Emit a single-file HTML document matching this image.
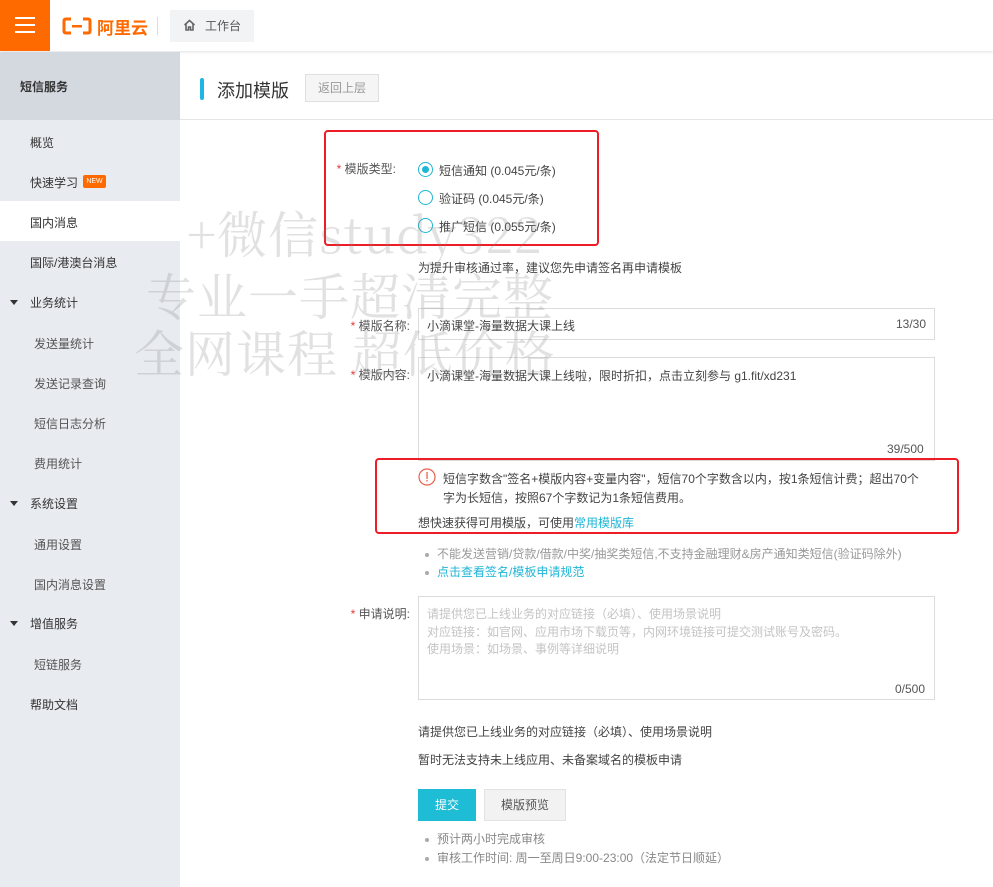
<!DOCTYPE html>
<html><head><meta charset="utf-8"><style>
*{margin:0;padding:0;box-sizing:border-box}
body{width:993px;height:887px;overflow:hidden;background:#fff;font-family:"Liberation Sans","Noto Sans CJK SC",sans-serif;font-size:12px;color:#333;position:relative}
.a{position:absolute;white-space:nowrap}
.side{position:absolute;left:0;top:52px;width:180px;height:835px;background:#e8ebf0}
.sidehd{position:absolute;left:0;top:52px;width:180px;height:68px;background:#d4d9e0}
.si{position:absolute;left:30px;font-size:12px;color:#333}
.sub{left:34px;color:#555}
.tri{position:absolute;left:10px;width:0;height:0;border-left:4px solid transparent;border-right:4px solid transparent;border-top:5px solid #333}
.lbl{position:absolute;font-size:12px;color:#555;text-align:right;width:80px}
.lbl b{color:#e4393c;font-weight:normal}
.box{position:absolute;border:1px solid #dcdcdc;background:#fff}
.radio{position:absolute;width:15px;height:15px;border:1px solid #1fb6d6;border-radius:50%}
.red{position:absolute;border:2px solid #ee1c25;border-radius:4px}
.wm{position:absolute;font-family:"Noto Serif CJK SC","Liberation Serif",serif;font-size:50px;color:rgba(130,130,130,0.24);white-space:nowrap;letter-spacing:1px}
.dot{display:inline-block;width:4px;height:4px;border-radius:50%;background:#aaa;margin-right:8px;vertical-align:middle}
</style></head><body>
<div class="a" style="left:0;top:0;width:993px;height:51px;background:#fff;box-shadow:0 1px 3px rgba(0,0,0,.12)"></div>
<div class="a" style="left:0;top:0;width:50px;height:51px;background:#ff6a00"></div>
<div class="a" style="left:15px;top:17px;width:20px;height:2px;background:#fff"></div>
<div class="a" style="left:15px;top:24px;width:20px;height:2px;background:#fff"></div>
<div class="a" style="left:15px;top:31px;width:20px;height:2px;background:#fff"></div>
<svg class="a" style="left:62px;top:16px" width="30" height="20" viewBox="0 0 30 20"><path d="M9 3H4Q2 3 2 5V15Q2 17 4 17H9M21 3H26Q28 3 28 5V15Q28 17 26 17H21" fill="none" stroke="#ff6a00" stroke-width="3"/><rect x="10" y="9" width="10" height="2.5" fill="#ff6a00"/></svg>
<div class="a" style="left:97px;top:14px;font-size:17px;font-weight:bold;color:#ff6a00">阿里云</div>
<div class="a" style="left:157px;top:17px;width:1px;height:18px;background:#ddd"></div>
<div class="a" style="left:170px;top:10px;width:84px;height:32px;background:#f2f3f5"></div>
<svg class="a" style="left:183px;top:19px" width="13" height="12" viewBox="0 0 13 12"><path d="M1.5 6L6.5 1.5L11.5 6M3 5V11H5.5V8H7.5V11H10V5" fill="none" stroke="#666" stroke-width="1.6"/></svg>
<div class="a" style="left:205px;top:17px;font-size:12px;color:#555">工作台</div>
<div class="side"></div><div class="sidehd"></div>
<div class="a" style="left:20px;top:78px;font-weight:bold;color:#333">短信服务</div>
<div class="si" style="top:134px">概览</div>
<div class="si" style="top:174px">快速学习</div>
<div class="a" style="left:83px;top:175px;width:23px;height:13px;background:#ff6a00;color:#fff;font-size:7px;line-height:13px;text-align:center;border-radius:2px">NEW</div>
<div class="a" style="left:0;top:201px;width:180px;height:40px;background:#fff"></div>
<div class="si" style="top:214px">国内消息</div>
<div class="si" style="top:254px">国际/港澳台消息</div>
<div class="tri" style="top:300px"></div><div class="si" style="top:294px">业务统计</div>
<div class="si sub" style="top:335px">发送量统计</div>
<div class="si sub" style="top:375px">发送记录查询</div>
<div class="si sub" style="top:415px">短信日志分析</div>
<div class="si sub" style="top:455px">费用统计</div>
<div class="tri" style="top:501px"></div><div class="si" style="top:495px">系统设置</div>
<div class="si sub" style="top:536px">通用设置</div>
<div class="si sub" style="top:576px">国内消息设置</div>
<div class="tri" style="top:621px"></div><div class="si" style="top:615px">增值服务</div>
<div class="si sub" style="top:656px">短链服务</div>
<div class="si" style="top:696px">帮助文档</div>
<div class="a" style="left:180px;top:119px;width:813px;height:1px;background:#e5e5e5"></div>
<div class="a" style="left:200px;top:78px;width:4px;height:22px;background:#1fb6e6;border-radius:2px"></div>
<div class="a" style="left:217px;top:77px;font-size:18px;color:#333">添加模版</div>
<div class="a" style="left:305px;top:74px;width:74px;height:28px;border:1px solid #e0e0e0;background:#f5f5f5;color:#999;font-size:12px;line-height:26px;text-align:center">返回上层</div>
<div class="lbl" style="left:316px;top:160px"><b>*</b> 模版类型:</div>
<div class="radio" style="left:418px;top:162px"></div><div class="a" style="left:422px;top:166px;width:7px;height:7px;border-radius:50%;background:#1fb6d6"></div>
<div class="a" style="left:439px;top:162px;color:#444">短信通知 (0.045元/条)</div>
<div class="radio" style="left:418px;top:190px"></div>
<div class="a" style="left:439px;top:190px;color:#444">验证码 (0.045元/条)</div>
<div class="radio" style="left:418px;top:218px"></div>
<div class="a" style="left:439px;top:218px;color:#444">推广短信 (0.055元/条)</div>
<div class="red" style="left:324px;top:130px;width:275px;height:116px"></div>
<div class="a" style="left:418px;top:259px;color:#444">为提升审核通过率，建议您先申请签名再申请模板</div>
<div class="lbl" style="left:330px;top:317px"><b>*</b> 模版名称:</div>
<div class="box" style="left:418px;top:308px;width:517px;height:32px"></div>
<div class="a" style="left:427px;top:317px;color:#444">小滴课堂-海量数据大课上线</div>
<div class="a" style="left:896px;top:317px;color:#555">13/30</div>
<div class="lbl" style="left:330px;top:366px"><b>*</b> 模版内容:</div>
<div class="box" style="left:418px;top:357px;width:517px;height:104px"></div>
<div class="a" style="left:427px;top:367px;color:#444">小滴课堂-海量数据大课上线啦，限时折扣，点击立刻参与 g1.fit/xd231</div>
<div class="a" style="left:887px;top:442px;color:#555">39/500</div>
<svg class="a" style="left:418px;top:468px" width="18" height="18"><circle cx="9" cy="9" r="8" fill="none" stroke="#e8604c" stroke-width="1.2"/><rect x="8.4" y="4" width="1.3" height="7" fill="#e8604c"/><rect x="8.4" y="12" width="1.3" height="1.5" fill="#e8604c"/></svg>
<div class="a" style="left:443px;top:470px;color:#444">短信字数含"签名+模版内容+变量内容"，短信70个字数含以内，按1条短信计费；超出70个</div>
<div class="a" style="left:443px;top:489px;color:#444">字为长短信，按照67个字数记为1条短信费用。</div>
<div class="a" style="left:418px;top:514px;color:#444">想快速获得可用模版，可使用<span style="color:#1fb6d6">常用模版库</span></div>
<div class="red" style="left:375px;top:458px;width:584px;height:76px"></div>
<div class="a" style="left:425px;top:545px;color:#999"><span class="dot"></span>不能发送营销/贷款/借款/中奖/抽奖类短信,不支持金融理财&amp;房产通知类短信(验证码除外)</div>
<div class="a" style="left:425px;top:563px;color:#1fb6d6"><span class="dot"></span>点击查看签名/模板申请规范</div>
<div class="lbl" style="left:330px;top:605px"><b>*</b> 申请说明:</div>
<div class="box" style="left:418px;top:596px;width:517px;height:104px"></div>
<div class="a" style="left:427px;top:606px;color:#c4c4c4;line-height:17.5px">请提供您已上线业务的对应链接（必填）、使用场景说明<br>对应链接：如官网、应用市场下载页等，内网环境链接可提交测试账号及密码。<br>使用场景：如场景、事例等详细说明</div>
<div class="a" style="left:895px;top:682px;color:#555">0/500</div>
<div class="a" style="left:418px;top:723px;color:#444">请提供您已上线业务的对应链接（必填）、使用场景说明</div>
<div class="a" style="left:418px;top:751px;color:#444">暂时无法支持未上线应用、未备案域名的模板申请</div>
<div class="a" style="left:418px;top:789px;width:58px;height:32px;background:#1fbcd6;color:#fff;line-height:32px;text-align:center">提交</div>
<div class="a" style="left:484px;top:789px;width:82px;height:32px;background:#f2f2f2;border:1px solid #e3e3e3;color:#555;line-height:30px;text-align:center">模版预览</div>
<div class="a" style="left:425px;top:830px;color:#888"><span class="dot"></span>预计两小时完成审核</div>
<div class="a" style="left:425px;top:849px;color:#888"><span class="dot"></span>审核工作时间: 周一至周日9:00-23:00（法定节日顺延）</div>
<div class="wm" style="left:187px;top:196px">+微信study322</div>
<div class="wm" style="left:146px;top:258px">专业一手超清完整</div>
<div class="wm" style="left:134px;top:315px">全网课程 超低价格</div>
</body></html>
